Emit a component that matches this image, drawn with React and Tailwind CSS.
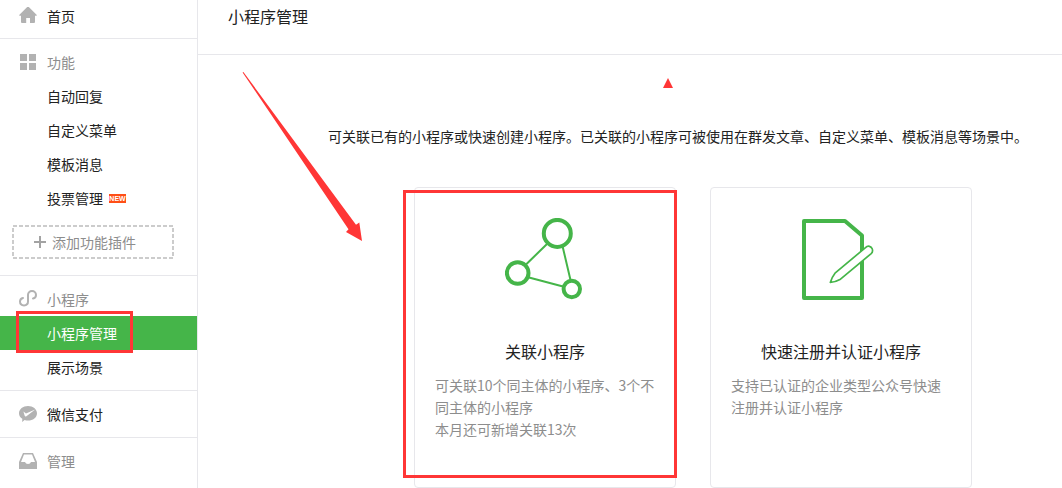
function HomeIcon() {
  return (
    <svg className="size-[18px]" viewBox="0 0 18 18" fill="#b2b2b2" aria-hidden="true">
      <path d="M9 -0.8 L17.8 8 Q18 8.8 17.3 8.8 H16 V15 Q16 16 15 16 H11 V11 H7.2 V16 H3 Q2 16 2 15 V8.8 H0.7 Q0 8.8 0.2 8 Z" />
    </svg>
  );
}

function GridIcon() {
  return (
    <svg className="size-[18px]" viewBox="0 0 18 18" fill="#b2b2b2" aria-hidden="true">
      <path d="M1 1h7v7H1zM10 1h7v7h-7zM1 10h7v7H1zM10 10h7v7h-7z" />
    </svg>
  );
}

function MiniProgramIcon() {
  return (
    <svg className="size-[18px]" viewBox="0 0 18 18" fill="none" stroke="#b2b2b2" strokeWidth="2" strokeLinecap="round" aria-hidden="true">
      <path d="M4 8 C2.2 8.4 1 9.8 1 11.6 C1 13.9 2.7 15.4 5 15.4 C7.3 15.4 9 13.9 9 11.6 V4.9 C9 2.7 10.7 1 13 1 C15.3 1 17 2.7 17 4.9 C17 6.8 15.8 8.2 14 8.6" />
    </svg>
  );
}

function PayIcon() {
  return (
    <svg className="size-[18px]" viewBox="0 0 18 18" aria-hidden="true">
      <path fill="#b2b2b2" d="M9 1 C14 1 18 4.2 18 8.2 C18 12.4 14 15.6 9 15.6 C7.8 15.6 6.7 15.4 5.6 15 L3.2 17 L3.3 13.8 C1.2 12.4 0 10.5 0 8.2 C0 4.2 4 1 9 1 Z" />
      <path fill="#ffffff" d="M4.4 6.6 L7 8.4 L16.2 4.4 L7.4 11.2 Q6.2 11.9 5.7 10.8 Z" />
    </svg>
  );
}

function TrayIcon() {
  return (
    <svg className="size-[18px]" viewBox="0 0 18 18" aria-hidden="true">
      <path fill="#b2b2b2" fillRule="evenodd" d="M4 1 H14 L18 10 V17 H0 V10 Z M5 2.6 L2 10 H6 Q6.6 12 9 12 Q11.4 12 12 10 H16 L13 2.6 Z" />
    </svg>
  );
}

function LinkedNodesIcon() {
  return (
    <svg className="h-[82px] w-20" viewBox="505 218 80 82" fill="none" stroke="#45b549" strokeWidth="4" aria-hidden="true">
      <path strokeWidth="2" d="M547 244 L526 264.5 M562.5 246 L570.5 280 M529 277.5 L563 286.5" />
      <circle cx="557.3" cy="233.4" r="13.5" />
      <circle cx="517.7" cy="273" r="10.8" />
      <circle cx="571.8" cy="289" r="8.2" />
    </svg>
  );
}

function RegisterIcon() {
  return (
    <svg className="h-[82px] w-20" viewBox="801 218 80 82" fill="none" stroke="#45b549" strokeLinejoin="round" aria-hidden="true">
      <path strokeWidth="4" d="M804 221 H845 L862 235.5 V298 H804 Z" />
      <path fill="#ffffff" strokeWidth="1.7" d="M830.3 282.4 Q832 277 835 273.2 L865.5 247.6 C868 245.2 871.2 246.2 872.2 248.8 C873 251 872.4 252.5 871.2 253.6 L840.5 279.2 Q836 281.8 830.3 282.4 Z" />
    </svg>
  );
}

function Item({ icon, children, muted, active, short }) {
  const tone = active ? "bg-[#45b549] text-white" : muted ? "text-[#8d8d8d]" : "text-[#222222]";
  const height = short ? "h-8" : "h-[34px]";
  const body = (
    <>
      <span className="flex w-7 shrink-0">{icon}</span>
      {children}
    </>
  );
  const classes = `flex items-center pl-[19px] ${height} ${tone}`;
  if (muted) return <h2 className={classes}>{body}</h2>;
  return (
    <a href="#" className={classes} aria-current={active ? "page" : undefined}>
      {body}
    </a>
  );
}

function Card({ icon, title, children, marked }) {
  return (
    <a href="#" className="relative flex min-h-[301px] w-[262px] shrink-0 flex-col items-center rounded-[4px] border border-[#e7e7eb] px-5 pt-[30px]">
      {icon}
      <h3 className="mt-[39px] text-base leading-6 text-[#222222]">{title}</h3>
      <div className="mt-[11px] w-full leading-[22px] text-[#8d8d8d]">{children}</div>
      {marked && <span className="pointer-events-none absolute -left-3 -right-0.5 top-0.5 h-72 border-3 border-[#ff3636]" />}
    </a>
  );
}

export default function App() {
  return (
    <div className="relative flex min-h-screen bg-white font-['Noto_Sans_CJK_SC',sans-serif] text-sm leading-[22px]">
      <nav className="w-[198px] shrink-0 border-r border-[#e7e7eb]">
        <div className="border-b border-[#e7e7eb] pb-1.5">
          <Item short icon={<HomeIcon />}>首页</Item>
        </div>
        <div className="border-b border-[#e7e7eb] pt-1.5 pb-4">
          <Item muted icon={<GridIcon />}>功能</Item>
          <Item>自动回复</Item>
          <Item>自定义菜单</Item>
          <Item>模板消息</Item>
          <Item>
            投票管理
            <span className="ml-1.5 flex h-[9px] w-[17px] items-center justify-center bg-[#ff4f17] font-['Liberation_Sans',sans-serif] text-[7px] leading-[9px] font-bold text-white">NEW</span>
          </Item>
          <button type="button" className="relative mx-3 mt-2.5 flex h-[34px] w-[162px] items-center gap-1.5 pl-[22px] text-[#8d8d8d]">
            <svg className="absolute inset-0 size-full" viewBox="0 0 162 34" fill="none" stroke="#cccccc" strokeWidth="2" strokeDasharray="4 2" aria-hidden="true">
              <rect x="1" y="1" width="160" height="32" />
            </svg>
            <svg className="size-3" viewBox="0 0 12 12" stroke="#a3a3a3" strokeWidth="2" aria-hidden="true">
              <path d="M6 0v12M0 6h12" />
            </svg>
            添加功能插件
          </button>
        </div>
        <div className="border-b border-[#e7e7eb] py-1.5">
          <Item muted icon={<MiniProgramIcon />}>小程序</Item>
          <div className="relative">
            <Item active>小程序管理</Item>
            <span className="pointer-events-none absolute -top-[5px] left-4 h-[42px] w-[117px] border-3 border-[#ff3636]" />
          </div>
          <Item>展示场景</Item>
        </div>
        <div className="border-b border-[#e7e7eb] py-1.5">
          <Item icon={<PayIcon />}>微信支付</Item>
        </div>
        <div className="pt-1.5">
          <Item muted icon={<TrayIcon />}>管理</Item>
        </div>
      </nav>

      <main className="min-w-0 grow">
        <header className="border-b border-[#e7e7eb] px-[30px] pt-1 pb-[26px]">
          <h1 className="text-base leading-6 text-[#222222]">小程序管理</h1>
        </header>
        <div className="pt-[70px] pl-24">
          <p className="text-center text-[#222222]">
            可关联已有的小程序或快速创建小程序。已关联的小程序可被使用在群发文章、自定义菜单、模板消息等场景中。
          </p>
          <div className="mt-10 flex justify-center gap-[34px] pl-[30px]">
            <Card marked icon={<LinkedNodesIcon />} title="关联小程序">
              <p>可关联10个同主体的小程序、3个不同主体的小程序</p>
              <p>本月还可新增关联13次</p>
            </Card>
            <Card icon={<RegisterIcon />} title="快速注册并认证小程序">
              <p>支持已认证的企业类型公众号快速注册并认证小程序</p>
            </Card>
          </div>
        </div>
      </main>

      <svg className="pointer-events-none absolute top-[72px] left-[242px] h-[170px] w-[432px]" viewBox="242 72 432 170" fill="#ff3636" aria-hidden="true">
        <path d="M242.6 72.4 L243.4 72 L356 224.8 L359.3 222.6 L362 241 L346 232 L348.5 229.3 Z" />
        <path d="M668 78 L673 88 H663 Z" />
      </svg>
    </div>
  );
}
